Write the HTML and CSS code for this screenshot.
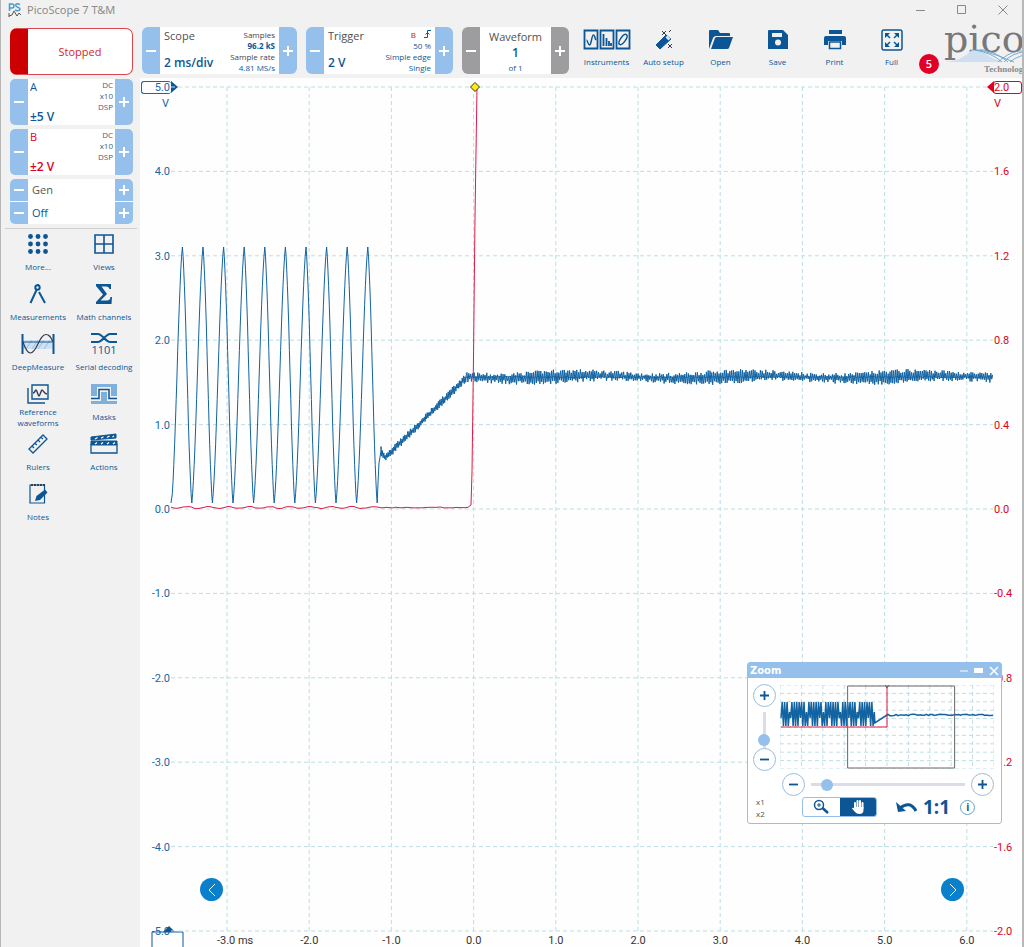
FILE: index.html
```html
<!DOCTYPE html>
<html lang="en">
<head>
<meta charset="utf-8">
<title>PicoScope 7 T&amp;M</title>
<link rel="stylesheet" href="styles.css">
</head>
<body>
<svg class="defs" aria-hidden="true">
  <symbol id="minus" viewBox="0 0 10 10"><path d="M0 5h10" stroke="currentColor" stroke-width="2"/></symbol>
  <symbol id="plus" viewBox="0 0 10 10"><path d="M0 5h10M5 0v10" stroke="currentColor" stroke-width="2"/></symbol>
</svg>
<div class="app">
  <header class="titlebar">
    <svg class="app-icon" width="14" height="16" viewBox="0 0 14 16" fill="none"><path d="M1.500 9V2H4a2 2 0 0 1 0 4H2M12 2.500C9 1 7 2 8 4s4 1 4 3-3 2-5 1" stroke="#4a9ad0" stroke-width="1.500"/><path d="M1 15V11M1 14l3-1 2-4 3 5 2-3 2 2" stroke="#555"/></svg>
    <h1 class="title">PicoScope 7 T&amp;M</h1>
    <div class="window-buttons">
      <button aria-label="Minimise"><svg width="10" height="10"><path d="M0 5.500h9"/></svg></button>
      <button aria-label="Maximise"><svg width="10" height="10"><path d="M.5.500h8v8h-8z"/></svg></button>
      <button aria-label="Close"><svg width="10" height="10"><path d="M.5.500l9 9M9.500.500l-9 9"/></svg></button>
    </div>
  </header>

  <aside class="sidebar">
    <button class="run-state">Stopped</button>
    <section class="channel">
      <button class="step" aria-label="A range down"><svg><use href="#minus"/></svg></button>
      <div class="channel-body channel-a"><span class="channel-name">A</span><span class="channel-opts">DC<br>x10<br>DSP</span><strong class="value">±5 V</strong></div>
      <button class="step" aria-label="A range up"><svg><use href="#plus"/></svg></button>
    </section>
    <section class="channel">
      <button class="step" aria-label="B range down"><svg><use href="#minus"/></svg></button>
      <div class="channel-body channel-b"><span class="channel-name">B</span><span class="channel-opts">DC<br>x10<br>DSP</span><strong class="value">±2 V</strong></div>
      <button class="step" aria-label="B range up"><svg><use href="#plus"/></svg></button>
    </section>
    <section class="generator">
      <button class="step" aria-label="Previous generator"><svg><use href="#minus"/></svg></button><span class="gen-name">Gen</span><button class="step" aria-label="Next generator"><svg><use href="#plus"/></svg></button>
      <button class="step" aria-label="Previous state"><svg><use href="#minus"/></svg></button><span class="gen-state">Off</span><button class="step" aria-label="Next state"><svg><use href="#plus"/></svg></button>
    </section>
    <nav class="tools">
      <button class="tool"><svg width="20" height="20" viewBox="0 0 20 20" fill="#0d5695"><circle cx="2.500" cy="2.500" r="2.400"/><circle cx="10" cy="2.500" r="2.400"/><circle cx="17.500" cy="2.500" r="2.400"/><circle cx="2.500" cy="10" r="2.400"/><circle cx="10" cy="10" r="2.400"/><circle cx="17.500" cy="10" r="2.400"/><circle cx="2.500" cy="17.500" r="2.400"/><circle cx="10" cy="17.500" r="2.400"/><circle cx="17.500" cy="17.500" r="2.400"/></svg><span>More...</span></button>
      <button class="tool"><svg width="20" height="20" viewBox="0 0 20 20" fill="none" stroke="#0d5695" stroke-width="1.600"><path d="M1 1h18v18H1zM10 1v18M1 10h18"/></svg><span>Views</span></button>
      <button class="tool"><svg width="18" height="20" viewBox="0 0 18 20" fill="none" stroke="#0d5695" stroke-width="2"><circle cx="8.500" cy="3.500" r="2.200"/><path d="M7.500 6L1.500 19M10 8l6 11M9 1V0"/></svg><span>Measurements</span></button>
      <button class="tool"><svg width="18" height="20" viewBox="0 0 18 20" fill="#0d5695"><path d="M1 0h15v5h-1.500Q14 2.500 11.500 2.500H6.500L12 10l-6.500 6.500H12q3 0 3.500-3.500H17l-.5 7H1v-2l7-7.500L1 2z"/></svg><span>Math channels</span></button>
      <button class="tool"><svg width="34" height="22" viewBox="0 0 34 22" fill="none"><path d="M2 7h30v9H2z" fill="#cfe0f0"/><path d="M5 16l6-9M11 16l6-9M17 16l6-9M23 16l6-9" stroke="#8fb4d8" stroke-width=".8"/><path d="M2 9h29" stroke="#0d5695"/><path d="M1.500 1v20M32.500 1v20" stroke="#0d5695" stroke-width="2"/><path d="M2 9C4 15 6 20 9.500 20 16 20 18 1.500 25 1.500 29 1.500 30 5 32 9" stroke="#333b50" stroke-width="1.200"/></svg><span>DeepMeasure</span></button>
      <button class="tool"><svg width="26" height="24" viewBox="0 0 26 24" fill="none"><path d="M0 2h7c4 0 8 8 12 8h7M0 10h7c4 0 8-8 12-8h7" stroke="#0d5695" stroke-width="2"/><text x="13" y="22" class="bits">1101</text></svg><span>Serial decoding</span></button>
      <button class="tool"><svg width="22" height="20" viewBox="0 0 22 20" fill="none" stroke="#0d5695" stroke-width="1.400"><path d="M5 1h16v14H5zM1 4v15h17"/><path d="M6 9c2 0 2-3 3-3s2 6 3 6 2-6 3-6 2 4 5 4" stroke="#333b50"/></svg><span>Reference waveforms</span></button>
      <button class="tool"><svg width="26" height="20" viewBox="0 0 26 20" fill="none"><path d="M0 0h26v12h-6V3H6v9H0zM10 8h6v9h10v3H0v-3h10z" fill="#7fb0dc"/><path d="M0 14.500h8V5.500h10v9h8" stroke="#0d5695" stroke-width="1.500"/></svg><span>Masks</span></button>
      <button class="tool"><svg width="20" height="20" viewBox="0 0 20 20" fill="none" stroke="#0d5695" stroke-width="1.300"><path d="M15 1l4 4L5 19l-4-4zM4 12l2 2M7 9.500l2 1.500M10 6l2 2M13 3.500l2 1.500"/></svg><span>Rulers</span></button>
      <button class="tool"><svg width="28" height="22" viewBox="0 0 28 22" fill="none"><path d="M1 4l25-3v4L1 7zM1 8h26v4H1z" fill="#0d5695" stroke="#0d5695"/><path d="M5 6l2.500-1.500M11 5.200l2.500-1.500M17 4.500l2.500-1.500M22.500 4l1.500-1M5 11l2-1.500M11 11l2-1.500M17 11l2-1.500M23 11l2-1.500" stroke="#fff" stroke-width="1.300"/><path d="M1 11v9h26v-9" stroke="#0d5695" stroke-width="1.300"/></svg><span>Actions</span></button>
      <button class="tool"><svg width="20" height="22" viewBox="0 0 20 22" fill="none"><path d="M2 2h14.500v18H2z" stroke="#0d5695" stroke-width="1.200"/><path d="M3 2h14" stroke="#333b50" stroke-width="2" stroke-dasharray="2 1"/><path d="M7 18l1.500-5L17 6.500l2.500 3L12 17z" fill="#0d5695"/></svg><span>Notes</span></button>
    </nav>
  </aside>

  <div class="toolbar">
    <section class="setting">
      <button class="step" aria-label="Timebase down"><svg><use href="#minus"/></svg></button>
      <div class="setting-main"><h2>Scope</h2><strong class="value">2 ms/div</strong></div>
      <p class="setting-info"><span class="dark">Samples</span><b>96.2 kS</b><span class="dark">Sample rate</span><span>4.81 MS/s</span></p>
      <button class="step" aria-label="Timebase up"><svg><use href="#plus"/></svg></button>
    </section>
    <section class="setting">
      <button class="step" aria-label="Trigger level down"><svg><use href="#minus"/></svg></button>
      <div class="setting-main"><h2>Trigger</h2><strong class="value">2 V</strong></div>
      <p class="setting-info"><span><i class="source">B</i><svg width="7" height="8" viewBox="0 0 7 8" fill="none" stroke="#0d5695"><path d="M0 7.500h3.500v-7H7M1.500 4.500l2-2 2 2"/></svg></span><span>50 %</span><span>Simple edge</span><span>Single</span></p>
      <button class="step" aria-label="Trigger level up"><svg><use href="#plus"/></svg></button>
    </section>
    <section class="setting waveform">
      <button class="step" aria-label="Previous waveform"><svg><use href="#minus"/></svg></button>
      <div class="waveform-body"><h2>Waveform</h2><strong class="value">1</strong><small>of 1</small></div>
      <button class="step" aria-label="Next waveform"><svg><use href="#plus"/></svg></button>
    </section>
    <div class="actions">
      <button class="action"><svg width="48" height="22" viewBox="0 0 48 22" fill="none" stroke="#0d5695" stroke-width="1.800"><path d="M1.500 1.500h13v18h-13zM17.500 1.500h13v18h-13zM33.500 1.500h13v18h-13z"/><path d="M3.500 11c1 0 1.500 5 3 5 2 0 2-10 4-10 1.500 0 1 3 2.500 5" stroke-width="1.500"/><path d="M20.500 5v12M23.500 9v8M26 12v5M28 14v3"/><ellipse cx="40" cy="10.500" rx="2.500" ry="6" transform="rotate(35 40 10.500)" stroke-width="1.500"/></svg>Instruments</button>
      <button class="action"><svg width="20" height="22" viewBox="0 0 20 22"><path d="M2 16L12 6l5 4L6 20z" fill="#0d5695" stroke="#0d5695" stroke-linejoin="round"/><path d="M11.500 8.500l2-2 3 3-2 2z" fill="#d6e7f7"/><path d="M8 2l4 4M12 2L8 6M14 15l4 4M18 15l-4 4M15 3l2-2" stroke="#333b50"/></svg>Auto setup</button>
      <button class="action"><svg width="26" height="22" viewBox="0 0 26 22" fill="#0d5695"><path d="M1 20V2q0-1 1-1h8l2 3h9q1 0 1 1v2H8q-2 0-3 2zM3 20L7 9q.5-1 2-1h16L21 19q-.5 1-2 1z"/></svg>Open</button>
      <button class="action"><svg width="20" height="22" viewBox="0 0 20 22"><path d="M1 1h14l5 5v14H0V2q0-1 1-1z" fill="#0d5695"/><path d="M4 4h10v4H4z" fill="#f0f0f0"/><circle cx="10" cy="13.500" r="3" fill="#f0f0f0"/></svg>Save</button>
      <button class="action"><svg width="22" height="22" viewBox="0 0 22 22" fill="#0d5695"><path d="M5 1h13v4H5zM2 7h18q2 0 2 2v7h-4v-4H4v4H0V9q0-2 2-2z"/><path d="M5.500 13h11v6.500h-11z" fill="#f0f0f0" stroke="#0d5695" stroke-width="1.500"/></svg>Print</button>
      <button class="action"><svg width="22" height="22" viewBox="0 0 22 22"><rect x="1" y="1" width="20" height="20" rx="2" fill="none" stroke="#0d5695" stroke-width="1.500"/><path d="M4 4h5L4 9zM18 4h-5l5 5zM4 18h5l-5-5zM18 18h-5l5-5z" fill="#0d5695"/><path d="M5 5l4 4M17 5l-4 4M5 17l4-4M17 17l-4-4" stroke="#0d5695" stroke-width="1.500"/></svg>Full</button>
    </div>
    <span class="badge">5</span>
    <div class="logo"><span class="logo-name">pico</span><svg class="logo-wave" width="90" height="14" viewBox="0 0 90 14" fill="none"><path d="M0 13Q18 12 28 1h8Q50 12 62 13z" fill="#cfdfef"/><path d="M26 1h14Q52 3 64 13M31 1Q48 4 58 13M36 1Q54 6 70 13M54 13Q64 4 74 2h16M60 13Q68 4 80 3M66 13Q74 6 90 4" stroke="#5c9ccc" stroke-width=".8"/></svg><span class="logo-sub">Technology</span></div>
  </div>

  <main class="chart">
    <ul class="axis axis-a">
      <li><span class="tag">5.0</span><span class="unit">V</span></li><li>4.0</li><li>3.0</li><li>2.0</li><li>1.0</li><li>0.0</li><li>-1.0</li><li>-2.0</li><li>-3.0</li><li>-4.0</li><li class="last">-5.0<svg class="axis-grip" width="34" height="20" viewBox="0 0 34 20" fill="none"><path d="M1 20V4h31v16" stroke="#0d5695"/><path d="M12 4l6-6 6 6z" fill="#0d5695"/></svg></li>
    </ul>
    <div class="plot">
      <svg class="traces" viewBox="0 0 822 844" preserveAspectRatio="none" role="img" aria-label="Channel A and channel B waveforms">
        <path class="grid" id="grid"/>
        <path class="trace-a" id="traceA"/>
        <path class="trace-a" id="traceMean"/>
        <path class="trace-b" id="traceB"/>
      </svg>
      <svg class="trigger-mark" width="10" height="10" viewBox="0 0 10 10"><path d="M5 .5L9.500 5 5 9.500.5 5z" fill="#ffee00" stroke="#333"/></svg>
      <button class="pager pager-prev" aria-label="Previous"><svg width="8" height="14"><path d="M7 1L1 7l6 6"/></svg></button>
      <button class="pager pager-next" aria-label="Next"><svg width="8" height="14"><path d="M1 1l6 6-6 6"/></svg></button>
    </div>
    <ul class="axis axis-b">
      <li><span class="tag">2.0</span><span class="unit">V</span></li><li>1.6</li><li>1.2</li><li>0.8</li><li>0.4</li><li>0.0</li><li>-0.4</li><li>-0.8</li><li>-1.2</li><li>-1.6</li><li>-2.0</li>
    </ul>
    <ul class="axis-time">
      <li class="with-unit">-3.0 ms</li><li>-2.0</li><li>-1.0</li><li>0.0</li><li>1.0</li><li>2.0</li><li>3.0</li><li>4.0</li><li>5.0</li><li>6.0</li>
    </ul>

    <section class="zoom">
      <header class="zoom-head"><h2>Zoom</h2>
        <button aria-label="Collapse"><svg width="10" height="8"><path d="M1 4h8" stroke="#fff"/></svg></button>
        <button aria-label="Dock"><svg width="10" height="8"><path d="M0 1h9v5H0z" fill="#fff"/></svg></button>
        <button aria-label="Close zoom"><svg width="10" height="10"><path d="M1 1l8 8M9 1l-8 8" stroke="#fff" stroke-width="1.500"/></svg></button>
      </header>
      <div class="zoom-body">
        <div class="zoom-vertical">
          <button class="round" aria-label="Zoom in vertically"><svg><use href="#plus"/></svg></button>
          <input type="range" aria-label="Vertical zoom" min="0" max="100" value="8">
          <button class="round" aria-label="Zoom out vertically"><svg><use href="#minus"/></svg></button>
        </div>
        <svg class="overview" viewBox="0 0 212 84" preserveAspectRatio="none">
          <path class="grid" id="miniGrid"/>
          <path class="trace-a" id="miniA"/>
          <path d="M1 42H106V1" class="trace-b"/>
          <path d="M67 1H173V83H67z" class="viewport"/>
          <path d="M104 0l2 3 2-3" class="viewport"/>
        </svg>
        <div class="zoom-horizontal">
          <button class="round" aria-label="Zoom out horizontally"><svg><use href="#minus"/></svg></button>
          <input type="range" aria-label="Horizontal zoom" min="0" max="100" value="7">
          <button class="round" aria-label="Zoom in horizontally"><svg><use href="#plus"/></svg></button>
        </div>
        <p class="factors">x1<br>x2</p>
        <div class="zoom-tools">
          <div class="modes">
            <button aria-label="Zoom mode"><svg width="18" height="16" viewBox="0 0 18 16" fill="none" stroke="#0d5695"><circle cx="7" cy="6" r="4.500" stroke-width="1.500"/><path d="M5 6h4M7 4v4"/><path d="M10.500 9l5.500 5" stroke-width="2.500"/></svg></button>
            <button class="on" aria-label="Pan mode"><svg width="16" height="16" viewBox="0 0 16 16" fill="none" stroke="#fff" stroke-width="2" stroke-linecap="round"><path d="M5 9V4M7.500 8V2M10 8V2M12.500 9V4"/><path d="M4.500 8h9v3q0 4-4 4-3 0-4.500-2L2 9.500q1-1.500 3 .5z" fill="#fff" stroke="none"/></svg></button>
          </div>
          <button class="plain" aria-label="Undo zoom"><svg width="22" height="14" viewBox="0 0 22 14" fill="none"><path d="M4 8Q14 0 20 11" stroke="#0d5695" stroke-width="3"/><path d="M0 2l2 10 8-1z" fill="#0d5695"/></svg></button>
          <button class="plain ratio">1:1</button>
          <button class="info" aria-label="Information">i</button>
        </div>
      </div>
    </section>
  </main>
</div>
<script src="script.js"></script>
</body>
</html>
```
FILE: styles.css
```css
* { box-sizing: border-box; }
:root {
  --blue: #0d5695;
  --light: #94c0eb;
  --red: #e00025;
  --panel: #f1f1f1;
}
body {
  margin: 0;
  background: var(--panel);
  color: var(--blue);
  font-family: "Open Sans", "Noto Sans", sans-serif;
  font-size: 11px;
  line-height: 16px;
  overflow: hidden;
}
h1, h2, p, ul { margin: 0; padding: 0; font-weight: 400; }
ul { list-style: none; }
button { border: 0; padding: 0; background: none; color: inherit; font: inherit; }
svg { display: block; }
.defs { position: absolute; width: 0; height: 0; }

.app {
  display: grid;
  grid-template-columns: 139px minmax(0, 1fr);
  grid-template-rows: 20px 58px minmax(0, 1fr);
  height: 100vh;
  border: solid #b8b8b8;
  border-width: 0 2px 0 1px;
}

.titlebar { grid-column: 1 / -1; display: flex; align-items: center; gap: 5px; padding: 0 14px 0 7px; }
.title { flex: 1; color: #8b8b8b; font-family: "Noto Sans", sans-serif; font-size: 11px; }
.window-buttons { display: flex; gap: 31px; }
.window-buttons svg { fill: none; stroke: #888; }

/* Sidebar */
.sidebar { grid-row: 2 / 4; display: flex; flex-direction: column; gap: 4px; padding: 8px 7px 0 9px; }
.run-state {
  height: 47px;
  border: 1px solid #dc4450;
  border-left: 18px solid #cc0000;
  border-radius: 7px;
  background: #fff;
  color: #d51f2d;
  font-size: 11px;
}
.step { display: grid; place-items: center; width: 18px; background: var(--light); color: #fff; }
.step svg { width: 10px; height: 10px; }
.channel { display: flex; height: 46px; border-radius: 5px; overflow: hidden; background: #fff; }
.channel-body { flex: 1; display: grid; grid-template-columns: 1fr auto; grid-template-rows: 18px 1fr; padding: 0 2px 0 2px; }
.channel-opts { grid-row: 1 / 3; grid-column: 2; color: #46617d; font-size: 8px; line-height: 11px; text-align: right; }
.channel-b .channel-name, .channel-b .value { color: var(--red); }
.value { font-size: 12px; font-weight: 600; line-height: 16px; }
.channel .value { align-self: end; }
.generator { display: grid; grid-template-columns: 18px 1fr 18px; grid-auto-rows: 22px; row-gap: 1px; border-radius: 5px; overflow: hidden; background: #fff; }
.generator span { padding-left: 4px; font-size: 11px; line-height: 22px; }
.gen-name { color: #555; }
.tools {
  display: grid;
  grid-template-columns: 1fr 1fr;
  grid-auto-rows: 50px;
  margin: 0 -4px 0 -5px;
  padding-top: 3px;
  border-top: 1px solid #d0d0d0;
}
.tool { display: grid; grid-template-rows: 24px 21px; justify-items: center; align-items: center; align-content: start; font-size: 8px; line-height: 11px; }
.tool span { max-width: 66px; padding: 0 2px; }
.tool:nth-child(7) span { max-width: 54px; }
.bits { fill: var(--blue); font: 11px "Open Sans", sans-serif; text-anchor: middle; }

/* Toolbar */
.toolbar { display: flex; align-items: flex-start; gap: 9px; padding: 7px 0 4px 2px; overflow: hidden; }
.setting { display: flex; flex: none; height: 47px; border-radius: 6px; overflow: hidden; background: #fff; }
.setting:first-child { width: 155px; }
.setting { width: 147px; }
.setting-main { display: flex; flex: 1; flex-direction: column; justify-content: space-between; padding: 1px 0 3px 4px; }
.setting h2 { color: #505050; font-size: 11px; white-space: nowrap; }
.setting-info { display: flex; flex-direction: column; align-items: flex-end; padding: 2px 4px 0 0; font-size: 8px; line-height: 11px; }
.setting-info svg { display: inline-block; }
.dark { color: #444; }
.source { margin-right: 8px; color: var(--red); font-style: normal; }
.waveform { width: 107px; }
.waveform .step { background: #9d9da0; }
.waveform-body { display: flex; flex: 1; flex-direction: column; align-items: center; padding-top: 2px; }
.waveform-body small { font-size: 8px; line-height: 13px; }
.actions { display: flex; }
.action { display: flex; flex: none; flex-direction: column; align-items: center; gap: 5px; width: 57px; padding-top: 2px; font-size: 8px; line-height: 12px; }
.badge { flex: none; width: 20px; height: 20px; margin: 27px 0 0 -10px; border-radius: 50%; background: #e00025; color: #fff; font-size: 11px; font-weight: 600; line-height: 20px; text-align: center; }
.logo { display: grid; flex: none; width: 90px; margin-left: -4px; color: #77787a; }
.logo-name { font: 38px/28px "DejaVu Serif", serif; margin-top: -2px; }
.logo-wave { margin-top: -4px; }
.logo-sub { padding-left: 40px; color: #8a8a8a; font: bold 9px/12px "Liberation Serif", serif; }

/* Chart */
.chart {
  position: relative;
  display: grid;
  grid-template-columns: 31px minmax(0, 1fr) 29px;
  grid-template-rows: minmax(0, 1fr) 16px;
  background: #fefefe;
  font-family: Roboto, sans-serif;
}
.axis { display: flex; flex-direction: column; justify-content: space-between; margin-bottom: -9px; line-height: 20px; }
.axis li { position: relative; height: 18px; }
.axis-a { padding-right: 1px; color: #1667a5; text-align: right; }
.axis-b { padding-left: 1px; color: var(--red); }
.unit { position: absolute; top: 16px; }
.axis-a .unit { right: 1px; }
.axis-b .unit { left: 0; }
.tag { position: absolute; top: 3px; height: 13px; border: 1px solid currentColor; border-radius: 3px; line-height: 12px; }
.tag::after { content: ""; position: absolute; top: -1px; border: solid transparent; border-width: 6px 0; }
.axis-a .tag { right: -1px; width: 30px; border-right: 0; padding-right: 1px; }
.axis-a .tag::after { left: 100%; border-left: 7px solid var(--blue); }
.axis-b .tag { left: -1px; width: 29px; }
.axis-b .tag::after { right: 100%; border-right: 7px solid var(--red); }
.axis-grip { position: absolute; right: -15px; top: 6px; overflow: visible; }
.plot { position: relative; margin-top: 9px; }
.traces { position: absolute; width: 100%; height: 100%; overflow: visible; }
.traces path, .overview path { fill: none; vector-effect: non-scaling-stroke; }
.grid { stroke: #bcdfe4; stroke-dasharray: 4 3; }
.trace-a { stroke: #1263a2; }
.trace-b { stroke: #dc1c48; }
.trigger-mark { position: absolute; left: 37%; top: 0; translate: -50% -50%; }
.axis-time { grid-column: 2; display: grid; grid-template-columns: repeat(10, 1fr); margin: 0 -15px 0 15px; color: #333; line-height: 20px; text-align: center; }
.with-unit { padding-left: 16px; }
.pager { position: absolute; bottom: 30px; display: grid; place-items: center; width: 23px; height: 23px; border-radius: 50%; background: #0a80cc; }
.pager svg { fill: none; stroke: #fff; }
.pager-prev { left: 29px; }
.pager-next { right: 29px; }

/* Zoom window */
.zoom { position: absolute; right: 20px; bottom: 123px; width: 255px; border: 1px solid var(--light); border-radius: 3px; background: #fff; font-family: "Open Sans", sans-serif; }
.zoom-head { display: flex; align-items: center; gap: 5px; height: 15px; padding: 0 2px; background: var(--light); color: #fff; }
.zoom-head h2 { flex: 1; font: bold 10px/15px "DejaVu Sans", sans-serif; }
.zoom-body { display: grid; grid-template-columns: 24px 1fr; grid-template-rows: 89px 23px 24px; column-gap: 4px; padding: 6px 7px 3px 4px; }
.zoom-vertical { display: flex; flex-direction: column; align-items: center; height: 87px; }
.overview { width: 100%; height: 84px; margin-top: 1px; }
.zoom .grid { stroke: #bfe0e5; }
.overview .trace-a { stroke-width: 1.5; }
.viewport { stroke: #666; }
.round { display: grid; flex: none; place-items: center; width: 23px; height: 23px; border: 1px solid #9dbbd8; border-radius: 50%; background: #fff; }
.round svg { width: 9px; height: 9px; }
.zoom-horizontal { grid-column: 2; display: flex; align-items: center; gap: 6px; padding-left: 2px; }
input[type="range"] { appearance: none; flex: 1; min-width: 0; margin: 0; background: linear-gradient(#dcdce4, #dcdce4) center / 100% 3px no-repeat; }
.zoom-horizontal input { height: 12px; }
.zoom-vertical input { width: 12px; min-height: 0; writing-mode: vertical-lr; direction: rtl; margin: 5px 0 0; background-size: 3px 100%; }
input[type="range"]::-webkit-slider-thumb { appearance: none; width: 12px; height: 12px; border-radius: 50%; background: var(--light); }
.factors { padding-left: 4px; color: #555; font-size: 8px; line-height: 12px; }
.zoom-tools { display: flex; align-items: center; gap: 5px; padding: 0 11px 2px 22px; }
.modes { display: flex; width: 75px; height: 20px; margin-right: 14px; border: 1px solid var(--light); border-radius: 3px; overflow: hidden; }
.modes button { display: grid; flex: 1; place-items: center; }
.modes .on { background: var(--blue); }
.plain { flex: none; }
.ratio { font-size: 19px; font-weight: 700; line-height: 20px; }
.info { flex: none; width: 15px; height: 15px; margin-left: 5px; border: 1px solid #6d9fca; border-radius: 50%; font-size: 10px; font-weight: 700; line-height: 12px; }
```
FILE: script.js
```js
const byId = (id) => document.getElementById(id);

let seed = 7;
function noise() {
  seed = (seed * 16807) % 2147483647;
  return seed / 2147483647 - 0.5;
}

function toPath(points) {
  return 'M' + points.map(([x, y]) => x.toFixed(1) + ' ' + y.toFixed(1)).join('L');
}

function gridPath(width, height, xs, rows) {
  let d = '';
  for (const x of xs) d += `M${x} 0V${height}`;
  for (let r = 0; r <= rows; r++) d += `M0 ${(r * height) / rows}H${width}`;
  return d;
}

const columns = Array.from({ length: 10 }, (_, i) => 56 + i * 82.2);
byId('grid').setAttribute('d', gridPath(822, 844, columns, 10));

// Channel A: ten cycles, a ramp, then a noisy steady level.
const a = [[0, 416]];
const mean = [];
const period = 20.6;
const peakY = 160;
const troughY = 416;
function swing(from, x0, x1, to) {
  for (let i = 1; i <= 14; i++) {
    const t = i / 14;
    const s = 0.4 * t + 0.6 * (1 - Math.cos(Math.PI * t)) / 2;
    a.push([x0 + (x1 - x0) * t, from + (to - from) * s]);
  }
}
for (let c = 0; c < 10; c++) {
  const peakX = 11.4 + c * period;
  swing(troughY, c ? peakX - 11.2 : 0.5, peakX, peakY);
  swing(peakY, peakX, peakX + 9.4, troughY);
}
a.push([207, 396], [208, 376], [209, 370], [210, 364]);
for (let x = 210, k = 0; x < 296; x += 0.7, k++) {
  const t = (x - 214) / 82;
  const base = x < 214 ? 364 + (x - 210) * 1.7 : 371 - t * 81;
  a.push([x, base + (k % 2 ? 1 : -1) * (1.5 + Math.abs(noise()) * 6)]);
  mean.push([x, base]);
}
for (let x = 296, k = 0; x <= 822; x += 0.9, k++) {
  const phase = ((x - 296) % 170) / 170;
  const drift = phase < 0.5 ? 1.5 * Math.sin(phase * 6.28) : -1.5 * Math.sin((phase - 0.5) * 6.28);
  const size = 3 + 2.5 * Math.exp(-Math.pow((phase - 0.5) * 4, 2)) + noise() * 4;
  a.push([x, 290 + drift + (k % 2 ? 1 : -1) * size]);
  mean.push([x, 290 + noise() * 1.5]);
}
byId('traceA').setAttribute('d', toPath(a));
byId('traceMean').setAttribute('d', toPath(mean));

// Channel B: close to zero until the trigger, then a steep edge.
const b = [];
for (let x = 0; x < 299; x += 3) {
  const swell = x < 210 ? Math.sin(x / 3.3) * 0.9 : 0;
  b.push([x, 420.5 + swell + noise() * 0.8]);
}
b.push([300, 418], [301, 385], [302.5, 270], [304, 130], [306, 0]);
byId('traceB').setAttribute('d', toPath(b));

const miniColumns = Array.from({ length: 11 }, (_, i) => i * 21.2);
byId('miniGrid').setAttribute('d', gridPath(212, 84, miniColumns, 10));
const mini = [];
for (let x = 1, k = 0; x < 94; x += 1.2, k++) {
  mini.push([x, k % 2 ? 17 + (k % 7 === 0 ? 10 : 0) : 41 - (k % 8 === 0 ? 8 : 0)]);
}
mini.push([94, 38], [106, 30]);
for (let x = 107; x <= 211; x += 2) mini.push([x, 30 + noise() * 1.5]);
byId('miniA').setAttribute('d', toPath(mini));
```
